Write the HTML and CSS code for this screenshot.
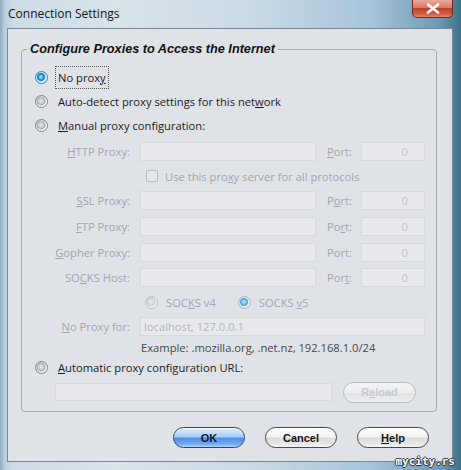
FILE: index.html
```html
<!DOCTYPE html>
<html>
<head>
	<title>Connection Settings</title>
	<link rel="stylesheet" href="styles.css">
</head>
<body>

<div class="ventana">
	<div class="barra">
		<span class="titulo">Connection Settings</span>
		<div class="cerrar">
			<svg width="14" height="11" viewBox="0 0 14 11"><path d="M2 1.5 L12 9.5 M12 1.5 L2 9.5" stroke="#fff" stroke-width="2.6" stroke-linecap="round"/></svg>
		</div>
	</div>

	<div class="cliente">
		<fieldset class="grupo">
			<legend>Configure Proxies to Access the Internet</legend>

			<div class="opcion"><span class="radio marcado"></span><span class="foco">No prox<u>y</u></span></div>
			<div class="opcion">
				<span class="radio"></span><span>Auto-detect proxy settings for this net<u>w</u>ork</span>
			</div>
			<div class="opcion alta"><span class="radio"></span><span><u>M</u>anual proxy configuration:</span></div>

			<!-- campos del proxy manual, todos deshabilitados -->
			<div class="manual">
				<span class="etiqueta"><u>H</u>TTP Proxy:</span>
				<span class="campo"></span>
				<span class="puerto-et"><u>P</u>ort:</span>
				<span class="campo puerto">0</span>

				<div class="ancho fila-check"><span class="check"></span><span>Use this pro<u>x</u>y server for all protocols</span></div>

				<span class="etiqueta"><u>S</u>SL Proxy:</span>
				<span class="campo"></span>
				<span class="puerto-et">P<u>o</u>rt:</span>
				<span class="campo puerto">0</span>

				<span class="etiqueta"><u>F</u>TP Proxy:</span>
				<span class="campo"></span>
				<span class="puerto-et">Po<u>r</u>t:</span>
				<span class="campo puerto">0</span>

				<span class="etiqueta"><u>G</u>opher Proxy:</span>
				<span class="campo"></span>
				<span class="puerto-et">Port:</span>
				<span class="campo puerto">0</span>

				<span class="etiqueta">SO<u>C</u>KS Host:</span>
				<span class="campo"></span>
				<span class="puerto-et">Por<u>t</u>:</span>
				<span class="campo puerto">0</span>

				<div class="ancho fila-socks">
					<span class="radio apagado"></span><span class="v4">SOC<u>K</u>S v4</span>
					<span class="radio apagado marcado"></span><span>SOCKS <u>v</u>5</span>
				</div>

				<span class="etiqueta"><u>N</u>o Proxy for:</span>
				<span class="ancho campo texto">localhost, 127.0.0.1</span>

				<div class="ancho ejemplo">Example: .mozilla.org, .net.nz, 192.168.1.0/24</div>
			</div>

			<div class="opcion baja"><span class="radio"></span><span><u>A</u>utomatic proxy configuration URL:</span></div>
			<div class="fila-url">
				<span class="campo url"></span>
				<button class="boton recargar">R<u>e</u>load</button>
			</div>
		</fieldset>

		<div class="botones">
			<button class="boton principal">OK</button>
			<button class="boton">Cancel</button>
			<button class="boton"><u>H</u>elp</button>
		</div>
	</div>

	<div class="marca">mycity.rs</div>
</div>

</body>
</html>
```

FILE: styles.css
```css
html, body {
	margin: 0;
	padding: 0;
}

body {
	font-family: "Open Sans", sans-serif;
	font-size: 11.2px;
	color: #1b1b1b;
}

div.ventana {
	width: 461px;
	height: 470px;
	box-sizing: border-box;
	padding: 0 8px 8px 7px;
	display: flex;
	flex-direction: column;
	position: relative;
	background: linear-gradient(to right, #8eaac0 0, #b9cedd 1%, #cddbe6 3%, #d9e3ea 25%, #c8d9e5 55%, #a9c5da 80%, #6f9bb6 95%, #3f7289 100%);
}

div.barra {
	height: 28px;
	display: flex;
	align-items: center;
	padding-left: 1px;
	position: relative;
}

span.titulo {
	font-size: 12px;
	color: #141414;
	margin-top: -1px;
}

div.cerrar {
	position: absolute;
	top: 0;
	right: 0;
	width: 41px;
	height: 18px;
	box-sizing: border-box;
	border: 1px solid #6e2c22;
	border-top: none;
	border-radius: 0 0 5px 5px;
	background: linear-gradient(#e9aa9b, #d77a64 45%, #c2412a 50%, #cf5a40 80%, #e08a6c);
	display: flex;
	align-items: center;
	justify-content: center;
}

div.cliente {
	flex: 1;
	border: 1px solid #7a8998;
	background-color: #dfe2e7;
	display: flex;
	flex-direction: column;
}

fieldset.grupo {
	margin: 12px 15px 0 13px;
	padding: 8px 0 5px 0;
	border: 1px solid #a4a9af;
	border-radius: 4px;
	min-width: 0;
}

fieldset.grupo legend {
	margin-left: 5px;
	padding: 0 3px;
	font-family: "Liberation Sans", Arial, sans-serif;
	font-size: 12.7px;
	font-weight: bold;
	font-style: italic;
	line-height: 16px;
	color: #111;
}

div.opcion {
	height: 24px;
	display: flex;
	align-items: center;
	padding-left: 13px;
}

div.opcion.alta {
	height: 25px;
}

div.opcion.baja {
	height: 21px;
}

span.radio {
	width: 13px;
	height: 13px;
	box-sizing: border-box;
	border-radius: 50%;
	border: 1px solid #7f8388;
	background: radial-gradient(circle at 45% 45%, #eef0f2 0, #c9ccd0 2.5px, #a9adb2 4px, #e4e6e9 4.8px, #f8f8f8 6px);
	margin-right: 10px;
	flex-shrink: 0;
}

span.radio.marcado {
	border-color: #3f7fb2;
	background: radial-gradient(circle at 45% 45%, #c6f2ff 0, #35aef0 2px, #1279c9 3.5px, #c4e2f6 4.5px, #eef6fc 6px);
}

span.radio.apagado {
	border-color: #b8bcc1;
	background: radial-gradient(circle at 45% 45%, #eceef0 0, #d6d9dc 2.5px, #c8cbcf 4px, #e8eaec 4.8px, #f1f2f4 6px);
}

span.radio.apagado.marcado {
	border-color: #a3b8ca;
	background: radial-gradient(circle at 45% 45%, #d8f3fd 0, #7fc3ea 2px, #5d9fcf 3.5px, #d6e6f1 4.5px, #eef3f7 6px);
}

span.foco {
	outline: 1px dotted #555;
	padding: 3px 2px;
	margin-left: -2px;
}

div.manual {
	display: grid;
	grid-template-columns: 85px 186px 35px 64px;
	grid-template-rows: 26px 24px 25px 26px 26px 25px 24px 24px 19px;
	align-items: center;
	padding-left: 33px;
	color: #a2a6ab;
}

div.manual span.etiqueta {
	text-align: right;
	padding-right: 10px;
}

div.manual span.puerto-et {
	padding-left: 1px;
}

span.campo {
	display: block;
	width: 176px;
	height: 19px;
	box-sizing: border-box;
	border: 1px solid #d6d9de;
	background-color: #e7e9ed;
	line-height: 17px;
}

span.campo.puerto {
	width: 64px;
	text-align: right;
	padding-right: 16px;
	color: #c2c5c9;
}

span.campo.texto {
	width: 285px;
	padding-left: 3px;
	color: #b3b6ba;
}

div.manual .ancho {
	grid-column: 2 / 5;
}

div.fila-check {
	display: flex;
	align-items: center;
	padding-left: 6px;
}

span.check {
	width: 12px;
	height: 12px;
	box-sizing: border-box;
	border: 1px solid #b6babf;
	border-radius: 2px;
	background-color: #e6e8eb;
	margin-right: 7px;
}

div.fila-socks {
	display: flex;
	align-items: center;
	padding-left: 5px;
}

div.fila-socks span.radio {
	margin-right: 8px;
}

div.fila-socks span.v4 {
	margin-right: 22px;
}

div.ejemplo {
	padding-left: 1px;
	color: #45484c;
}

div.fila-url {
	height: 28px;
	display: flex;
	align-items: center;
	padding-left: 33px;
}

span.campo.url {
	width: 277px;
	height: 18px;
	margin-right: 11px;
}

button.boton {
	width: 72px;
	height: 21px;
	padding: 0;
	border: 1px solid #4a4a4a;
	border-radius: 11px;
	background: linear-gradient(#ffffff, #f3f3f3 45%, #dcdcdc 55%, #e9e9e9 85%, #f7f7f7);
	box-shadow: inset 0 1px 0 #fff;
	font-family: "Liberation Sans", Arial, sans-serif;
	font-size: 11px;
	font-weight: bold;
	color: #151515;
}

button.boton.principal {
	border-color: #23457a;
	background: linear-gradient(#e4f0ff, #a9cbf5 45%, #4f8fe2 55%, #74abf0 85%, #b7d6fb);
	color: #0e1b30;
}

button.boton.recargar {
	width: 73px;
	border-color: #b9bdc2;
	background: linear-gradient(#f3f4f5, #eceef0 50%, #e2e4e7 55%, #eceef0);
	box-shadow: none;
	color: #c6c9cd;
}

div.botones {
	display: flex;
	justify-content: flex-end;
	gap: 20px;
	margin-top: 15px;
	padding-right: 23px;
}

div.marca {
	position: absolute;
	right: 6px;
	bottom: 2px;
	font-family: "DejaVu Sans Mono", monospace;
	font-size: 11px;
	font-weight: bold;
	color: #fff;
	text-shadow: 1px 0 0 #333, -1px 0 0 #333, 0 1px 0 #333, 0 -1px 0 #333;
}
```
